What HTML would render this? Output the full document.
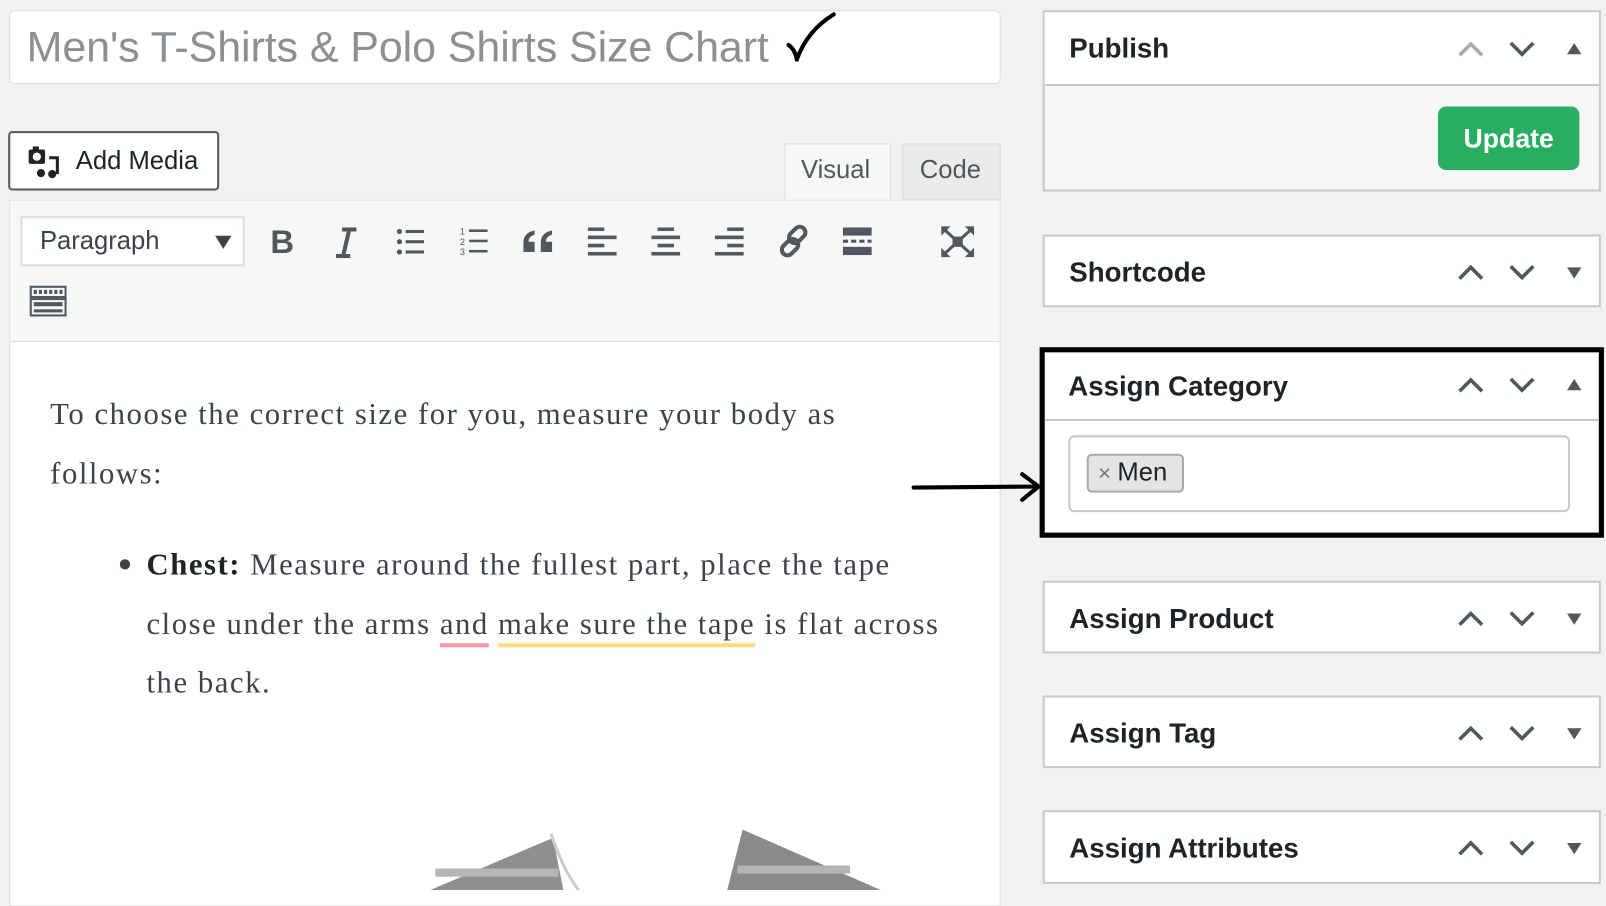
<!DOCTYPE html>
<html><head><meta charset="utf-8"><style>
*{box-sizing:border-box;margin:0;padding:0}
html,body{width:1606px;height:890px;overflow:hidden;background:#f1f1f1}
#w{position:absolute;left:0;top:0;width:1568px;height:869px;transform:scale(1.02423);transform-origin:0 0;font-family:"Liberation Sans",sans-serif;color:#1d2327}
.a{position:absolute}
.box{position:absolute;left:1018px;width:545px;background:#fff;border:2px solid #c8c8cc}
.hd{position:absolute;left:24px;font-weight:bold;font-size:27px;color:#1d2327}
.ic{position:absolute;right:0;width:150px;height:30px}
.ico{fill:none;stroke:#50575e;stroke-width:3.5}
.ser{font-family:'Liberation Serif',serif;font-size:30px;line-height:57.5px;color:#3c434a;letter-spacing:1.5px;white-space:nowrap}
</style></head><body><div id="w">
<div class="a" style="left:9px;top:10px;width:968px;height:72px;background:#fff;border:1px solid #dcdcde;border-radius:5px"></div>
<div class="a" style="left:26px;top:22px;font-size:42px;color:#8c8f94;letter-spacing:-0.1px">Men's T-Shirts &amp; Polo Shirts Size Chart</div>
<svg class="a" style="left:766px;top:10px" width="52" height="50"><path d="M4 34 Q10 38 12 48 Q22 20 48 4" fill="none" stroke="#000" stroke-width="4" stroke-linecap="round"/></svg>

<div class="a" style="left:8px;top:128px;width:206px;height:58px;background:#fff;border:2px solid #50575e;border-radius:4px"></div>
<svg class="a" style="left:26px;top:142px" width="34" height="34"><rect x="2" y="4" width="16" height="14" rx="2" fill="#1d2327"/><rect x="6" y="1" width="6" height="4" fill="#1d2327"/><circle cx="10" cy="11" r="4" fill="#fff"/><path d="M22 12h8v16" fill="none" stroke="#1d2327" stroke-width="3"/><circle cx="25" cy="28" r="4" fill="#1d2327"/><circle cx="14" cy="27" r="4" fill="#1d2327"/></svg>
<div class="a" style="left:74px;top:143px;font-size:25px">Add Media</div>

<div class="a" style="left:766px;top:140px;width:104px;height:57px;background:#f6f7f7;border:1px solid #dcdcde;border-bottom:none"></div>
<div class="a" style="left:782px;top:152px;font-size:25px;color:#50575e">Visual</div>
<div class="a" style="left:881px;top:140px;width:96px;height:55px;background:#ebebeb;border:1px solid #dcdcde"></div>
<div class="a" style="left:898px;top:152px;font-size:25px;color:#50575e">Code</div>

<div class="a" style="left:9px;top:195px;width:968px;height:690px;background:#fff;border:1px solid #dcdcde"></div>
<div class="a" style="left:10px;top:196px;width:966px;height:138px;background:#f6f7f7;border-bottom:1px solid #dcdcde"></div>
<div class="a" style="left:20px;top:211px;width:219px;height:49px;background:#fff;border:2px solid #dcdcde"></div>
<div class="a" style="left:39px;top:221px;font-size:25px;color:#3c434a">Paragraph</div>
<svg class="a" style="left:210px;top:230px" width="16" height="14"><path d="M0 0h16L8 13z" fill="#3c434a"/></svg>
<div class="a" style="left:264px;top:218px;font-size:32px;font-weight:bold;color:#50575e">B</div>
<svg class="a" style="left:326px;top:222px" width="24" height="30"><path d="M8 2h14M2 28h14M15 2L9 28" fill="none" stroke="#50575e" stroke-width="4"/></svg>
<svg class="a" style="left:386px;top:222px" width="30" height="28"><g fill="#50575e"><circle cx="4" cy="4" r="2.5"/><circle cx="4" cy="14" r="2.5"/><circle cx="4" cy="24" r="2.5"/><rect x="10" y="2.5" width="18" height="3"/><rect x="10" y="12.5" width="18" height="3"/><rect x="10" y="22.5" width="18" height="3"/></g></svg>
<svg class="a" style="left:448px;top:220px" width="30" height="30"><g fill="#50575e" font-size="9" font-family="Liberation Sans"><text x="1" y="9">1</text><text x="1" y="19">2</text><text x="1" y="29">3</text><rect x="10" y="4" width="18" height="2.5"/><rect x="10" y="14" width="18" height="2.5"/><rect x="10" y="24" width="18" height="2.5"/></g></svg>
<svg class="a" style="left:510px;top:224px" width="32" height="24"><g fill="#50575e"><path d="M1 22V13Q1 3 12 1v4Q6 7 6 12h6v10z"/><path d="M18 22V13Q18 3 29 1v4Q23 7 23 12h6v10z"/></g></svg>
<svg class="a" style="left:572px;top:222px" width="200" height="28"><g fill="#50575e"><rect x="2" y="0" width="16" height="3.5"/><rect x="2" y="8" width="28" height="3.5"/><rect x="2" y="16" width="16" height="3.5"/><rect x="2" y="24" width="28" height="3.5"/>
<rect x="70" y="0" width="16" height="3.5"/><rect x="64" y="8" width="28" height="3.5"/><rect x="70" y="16" width="16" height="3.5"/><rect x="64" y="24" width="28" height="3.5"/>
<rect x="138" y="0" width="16" height="3.5"/><rect x="126" y="8" width="28" height="3.5"/><rect x="138" y="16" width="16" height="3.5"/><rect x="126" y="24" width="28" height="3.5"/></g></svg>
<svg class="a" style="left:758px;top:218px" width="36" height="36"><g fill="none" stroke="#50575e" stroke-width="4"><rect x="15" y="2" width="11" height="18" rx="5.5" transform="rotate(45 20 11)"/><rect x="8" y="14" width="11" height="18" rx="5.5" transform="rotate(45 13 23)"/></g></svg>
<svg class="a" style="left:822px;top:222px" width="30" height="28"><g fill="#50575e"><rect x="1" y="0" width="28" height="8"/><rect x="1" y="12" width="5" height="3"/><rect x="9" y="12" width="5" height="3"/><rect x="17" y="12" width="5" height="3"/><rect x="25" y="12" width="4" height="3"/><rect x="1" y="19" width="28" height="8"/></g></svg>
<svg class="a" style="left:918px;top:220px" width="34" height="32"><g fill="#50575e"><path d="M1 1h9L1 10zM33 1h-9l9 9zM1 31h9L1 22zM33 31h-9l9-9z"/><rect x="12" y="11" width="10" height="10"/><path d="M5 5l24 22M29 5L5 27" stroke="#50575e" stroke-width="3"/></g></svg>
<svg class="a" style="left:28px;top:278px" width="38" height="32"><g fill="none" stroke="#50575e" stroke-width="2"><rect x="2" y="2" width="34" height="10"/><rect x="2" y="14" width="34" height="16"/></g><g fill="#50575e"><rect x="5" y="5" width="3" height="4"/><rect x="10" y="5" width="3" height="4"/><rect x="15" y="5" width="3" height="4"/><rect x="20" y="5" width="3" height="4"/><rect x="25" y="5" width="3" height="4"/><rect x="30" y="5" width="3" height="4"/><rect x="5" y="17" width="28" height="4"/><rect x="5" y="24" width="28" height="3"/></g></svg>

<div class="a ser" style="left:49px;top:376px">To choose the correct size for you, measure your body as<br>follows:</div>
<svg class="a" style="left:115px;top:544px" width="14" height="14"><circle cx="7" cy="7" r="5" fill="#3c434a"/></svg>
<div class="a ser" style="left:143px;top:523px"><b style="color:#1d2327">Chest:</b> Measure around the fullest part, place the tape<br>close under the arms <span style="text-decoration:underline;text-decoration-color:#f59aa8;text-decoration-thickness:4px;text-underline-offset:9px">and</span> <span style="text-decoration:underline;text-decoration-color:#fcdc7c;text-decoration-thickness:4px;text-underline-offset:9px">make sure the tape</span> is flat across<br>the back.</div>
<svg class="a" style="left:380px;top:800px" width="520" height="69"><path d="M40 69 L160 18 L170 69Z" fill="#8f8f8f"/><path d="M345 10 L480 69 L330 69Z" fill="#8a8a8a"/><path d="M158 14 Q170 50 185 69" fill="none" stroke="#ccc" stroke-width="3"/><rect x="45" y="48" width="120" height="8" fill="#b5b5b5"/><rect x="340" y="45" width="110" height="8" fill="#b5b5b5"/></svg>

<svg class="a" style="left:890px;top:460px" width="130" height="32"><path d="M2 16 L124 15 M108 3 L124 15 L108 28" fill="none" stroke="#000" stroke-width="4" stroke-linecap="round" stroke-linejoin="round"/></svg>

<div class="box" style="top:10px;height:177px;background:#f6f7f7"><div class="a" style="left:0;top:0;width:541px;height:72px;background:#fff;border-bottom:2px solid #c8c8cc"></div><div class="hd" style="top:20px">Publish</div>
<svg class="ic" style="top:21px" viewBox="0 0 150 30"><path d="M14 21l11-11 11 11" class="ico" style="stroke:#a7aaad"/><path d="M64 9l11 11 11-11" class="ico"/><path d="M119 20h14l-7-11z" fill="#50575e"/></svg>
<div class="a" style="left:384px;top:92px;width:138px;height:62px;background:#27ae60;border-radius:8px;color:#fff;font-size:26px;font-weight:bold;text-align:center;line-height:62px">Update</div></div>
<div class="box" style="top:229px;height:71px"><div class="hd" style="top:20px">Shortcode</div><svg class="ic" style="top:20px" viewBox="0 0 150 30"><path d="M14 21l11-11 11 11" class="ico"/><path d="M64 9l11 11 11-11" class="ico"/><path d="M119 10h14l-7 11z" fill="#50575e"/></svg></div>
<div class="a" style="left:1015px;top:339px;width:551px;height:186px;border:5px solid #000;background:#fff"></div>
<div class="a" style="left:1020px;top:409px;width:541px;height:2px;background:#c8c8cc"></div>
<div class="hd" style="left:1043px;top:362px">Assign Category</div>
<svg class="a" style="left:1411px;top:361px" width="150" height="30"><path d="M14 21l11-11 11 11" class="ico"/><path d="M64 9l11 11 11-11" class="ico"/><path d="M119 20h14l-7-11z" fill="#50575e"/></svg>
<div class="a" style="left:1043px;top:425px;width:490px;height:75px;border:2px solid #c8c8cc;border-radius:6px"></div>
<div class="a" style="left:1061px;top:443px;width:95px;height:38px;background:#e4e4e4;border:2px solid #aaa;border-radius:5px;font-size:25px;line-height:33px;color:#1d2327;padding-left:9px"><span style="color:#777;font-size:22px">× </span>Men</div>
<div class="box" style="top:567px;height:71px"><div class="hd" style="top:20px">Assign Product</div><svg class="ic" style="top:20px" viewBox="0 0 150 30"><path d="M14 21l11-11 11 11" class="ico"/><path d="M64 9l11 11 11-11" class="ico"/><path d="M119 10h14l-7 11z" fill="#50575e"/></svg></div>
<div class="box" style="top:679px;height:71px"><div class="hd" style="top:20px">Assign Tag</div><svg class="ic" style="top:20px" viewBox="0 0 150 30"><path d="M14 21l11-11 11 11" class="ico"/><path d="M64 9l11 11 11-11" class="ico"/><path d="M119 10h14l-7 11z" fill="#50575e"/></svg></div>
<div class="box" style="top:791px;height:72px"><div class="hd" style="top:20px">Assign Attributes</div><svg class="ic" style="top:20px" viewBox="0 0 150 30"><path d="M14 21l11-11 11 11" class="ico"/><path d="M64 9l11 11 11-11" class="ico"/><path d="M119 10h14l-7 11z" fill="#50575e"/></svg></div>
</div></body></html>
